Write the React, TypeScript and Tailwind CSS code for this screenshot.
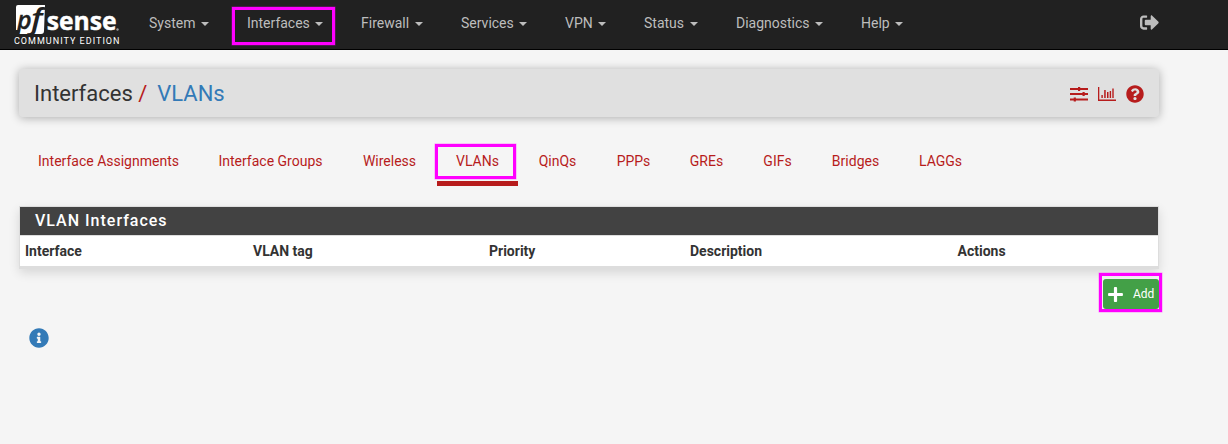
import React from "react";
import { FaInfoCircle, FaPlus, FaQuestionCircle, FaSignOutAlt } from "react-icons/fa";

const menus = [
  { label: "System", box: "w-[98px]" },
  { label: "Interfaces", box: "w-[114px]" },
  { label: "Firewall", box: "w-[100px]" },
  { label: "Services", box: "w-[104px]" },
  { label: "VPN", box: "w-[79px]" },
  { label: "Status", box: "w-[92px]" },
  { label: "Diagnostics", box: "w-[125px]" },
  { label: "Help", box: "w-[80px]" },
];

const tabs = [
  { label: "Interface Assignments", box: "w-[179px]" },
  { label: "Interface Groups", box: "w-[145px]" },
  { label: "Wireless", box: "w-[93px]" },
  { label: "VLANs", box: "w-[81px]" },
  { label: "QinQs", box: "w-[79px]" },
  { label: "PPPs", box: "w-[73px]" },
  { label: "GREs", box: "w-[73px]" },
  { label: "GIFs", box: "w-[69px]" },
  { label: "Bridges", box: "w-[87px]" },
  { label: "LAGGs", box: "w-[83px]" },
];

function Logo() {
  return (
    <svg width="110" height="48" viewBox="0 0 110 48" className="block shrink-0">
      <path d="M2 7Q2 5 4 5H31L30 31Q30 34 27 34H5L6 30H2Z" fill="#fff" />
      <g fontWeight="600" fontStyle="italic" fill="#212121" fontFamily="'Open Sans', sans-serif">
        <text x="3" y="29" fontSize="25" stroke="#212121" strokeWidth=".3">p</text>
        <text x="17" y="29" fontSize="28" textLength="11.5" lengthAdjust="spacingAndGlyphs">f</text>
      </g>
      <text x="32.7" y="29.5" fontSize="25" fontWeight="700" fill="#fff" stroke="#fff" strokeWidth=".4" fontFamily="'Open Sans', sans-serif" textLength="70" lengthAdjust="spacingAndGlyphs">sense</text>
      <circle cx="103.5" cy="29.5" r="1.2" fill="#999" />
      <text x="0" y="44" fontSize="9" fill="#fff" fontFamily="Roboto, sans-serif" textLength="105.5">COMMUNITY EDITION</text>
    </svg>
  );
}

function Sliders() {
  return (
    <svg width="18" height="16" viewBox="0 0 18 16" fill="#b71c1c">
      <path d="M0 2h18v2H0zM0 7h18v2H0zM0 12.5h18v2H0zM8 1h2.2v4H8zM12.5 6h2.2v4h-2.2zM3.7 11.5h2.2v4H3.7z" />
    </svg>
  );
}

function Chart() {
  return (
    <svg width="18" height="14" viewBox="0 0 18 14" fill="#b71c1c">
      <path d="M0 0h1.3v12.6H18V14H0zM3.4 8h1.4v3H3.4zM6.2 3h1.5v8H6.2zM9 5h1.5v6H9zM11.7 4h1.4v7h-1.4zM14.3 1.6h1.4V11h-1.4z" />
    </svg>
  );
}

export default function App() {
  return (
    <div className="h-[444px] w-[1228px] overflow-hidden bg-[#f5f5f5] font-['Roboto',sans-serif] text-sm leading-5 text-[#333]">
      <header className="flex h-[50px] border-b border-black bg-[#212121] pl-[14px]">
        <Logo />
        <nav className="ml-[25px] flex h-[46px] flex-1 text-[#bdbdbd]">
          {menus.map((m) => (
            <div key={m.label} className={`relative flex shrink-0 items-center ${m.box}`}>
              {m.label}
              <span className="ml-[5.5px] mt-px border-x-4 border-t-4 border-x-transparent border-t-[#bdbdbd]" />
              {m.label === "Interfaces" && (
                <span className="absolute -left-[15.5px] top-[6.5px] h-[38px] w-[103px] border-[3px] border-[#f0f] shadow-[0_0_0_0.5px_#ff00ff66]" />
              )}
            </div>
          ))}
        </nav>
        <FaSignOutAlt className="mr-[69px] mt-[13px] size-[19px] text-[#bdbdbd]" />
      </header>

      <main className="ml-[19px] w-[1140px] pt-[19px]">
        <div className="flex h-12 items-center rounded-[4px] bg-[#e0e0e0] px-[15px] shadow-[0_1px_10px_rgba(0,0,0,0.3)]">
          <h1 className="flex-1 whitespace-pre pt-[2px] text-[22px] leading-6">
            Interfaces<span className="text-[#b71c1c]"> / </span>
            <span className="ml-[4.5px] text-[#337ab7]">VLANs</span>
          </h1>
          <div className="flex items-center gap-[10px] pt-[2px]">
            <Sliders />
            <Chart />
            <FaQuestionCircle className="size-[18px] text-[#b71c1c]" />
          </div>
        </div>

        <div className="mt-[23px] flex h-[46px] text-[#b71c1c]">
          {tabs.map((t) => (
            <div
              key={t.label}
              className={`relative flex shrink-0 justify-center pt-[11px] ${t.box} ${t.label === "VLANs" ? "ml-px border-b-[5px] border-[#b71c1c]" : ""}`}
            >
              {t.label}
              {t.label === "VLANs" && (
                <span className="absolute -left-[2.5px] top-[3.5px] h-[35px] w-[81px] border-[3px] border-[#f0f] shadow-[0_0_0_0.5px_#ff00ff66]" />
              )}
            </div>
          ))}
        </div>

        <section className="mt-5 border border-[#ddd] bg-white shadow-[0_4px_10px_rgba(0,0,0,0.12)]">
          <h2 className="h-7 bg-[#424242] pl-[15px] text-base font-medium leading-[27px] tracking-[1px] text-white">
            VLAN Interfaces
          </h2>
          <div className="grid h-[33px] grid-cols-[228px_236px_201px_267.5px_auto] items-center border-b-2 border-t border-[#ddd] pl-[5px] font-bold">
            <span>Interface</span>
            <span>VLAN tag</span>
            <span>Priority</span>
            <span>Description</span>
            <span>Actions</span>
          </div>
        </section>

        <div className="mt-[10px] flex justify-end">
          <button className="relative flex h-[30px] w-[56px] items-center rounded-[3px] bg-[#43a047] pl-1 text-xs text-white">
            <FaPlus className="mr-[9px] size-[17px]" />
            Add
            <span className="absolute -left-[4px] -top-[6px] h-[39px] w-[63px] border-[3px] border-[#f0f] shadow-[0_0_0_0.5px_#ff00ff66]" />
          </button>
        </div>
        <FaInfoCircle className="ml-[10px] mt-[19px] size-5 text-[#337ab7]" />
      </main>
    </div>
  );
}
